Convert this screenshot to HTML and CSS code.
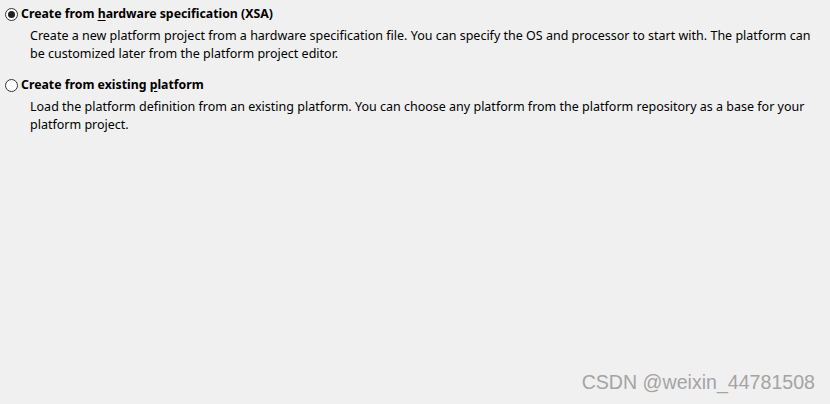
FILE: index.html
```html
<!DOCTYPE html>
<html>
<head>
<meta charset="utf-8">
<link rel="stylesheet" href="styles.css">
</head>
<body>
<div class="page">
  <div class="option">
    <label class="title"><span class="radio checked"></span><span class="label-text">Create from <u>h</u>ardware specification (XSA)</span></label>
    <p class="desc">Create a new platform project from a hardware specification file. You can specify the OS and processor to start with. The platform can be customized later from the platform project editor.</p>
  </div>
  <div class="option">
    <label class="title"><span class="radio"></span><span class="label-text">Create from existing <u>p</u>latform</span></label>
    <p class="desc">Load the platform definition from an existing platform. You can choose any platform from the platform repository as a base for your platform project.</p>
  </div>
</div>
<div class="watermark">CSDN @weixin_44781508</div>
</body>
</html>
```
FILE: styles.css
```css
html, body {
  margin: 0;
  padding: 0;
  background: #f0f0f0;
  width: 830px;
  height: 404px;
  overflow: hidden;
}
body {
  position: relative;
  font-family: "Noto Sans", "Open Sans", sans-serif;
  font-size: 12px;
  color: #000;
}
.page {
  padding: 5px 0 0 5px;
  display: flex;
  flex-direction: column;
  gap: 13px;
}
.option {
  display: flex;
  flex-direction: column;
}
.title {
  display: flex;
  align-items: center;
  gap: 3px;
  font-weight: bold;
  font-size: 12.3px;
  line-height: 18px;
  height: 18px;
}
.title u {
  text-decoration: underline;
  text-underline-offset: 2px;
}
.radio {
  width: 11px;
  height: 11px;
  border: 1px solid #333;
  border-radius: 50%;
  background: #fff;
  box-sizing: content-box;
  display: inline-flex;
  align-items: center;
  justify-content: center;
  flex: none;
}
.radio.checked::after {
  content: "";
  width: 7px;
  height: 7px;
  border-radius: 50%;
  background: #222;
}
.desc {
  margin: 4px 0 0 25px;
  width: 795px;
  font-size: 12.5px;
  line-height: 18px;
}
.watermark {
  position: absolute;
  right: 15px;
  bottom: 10px;
  font-family: "Liberation Sans", Arial, sans-serif;
  font-size: 19.6px;
  color: #a4a4a4;
}
```
